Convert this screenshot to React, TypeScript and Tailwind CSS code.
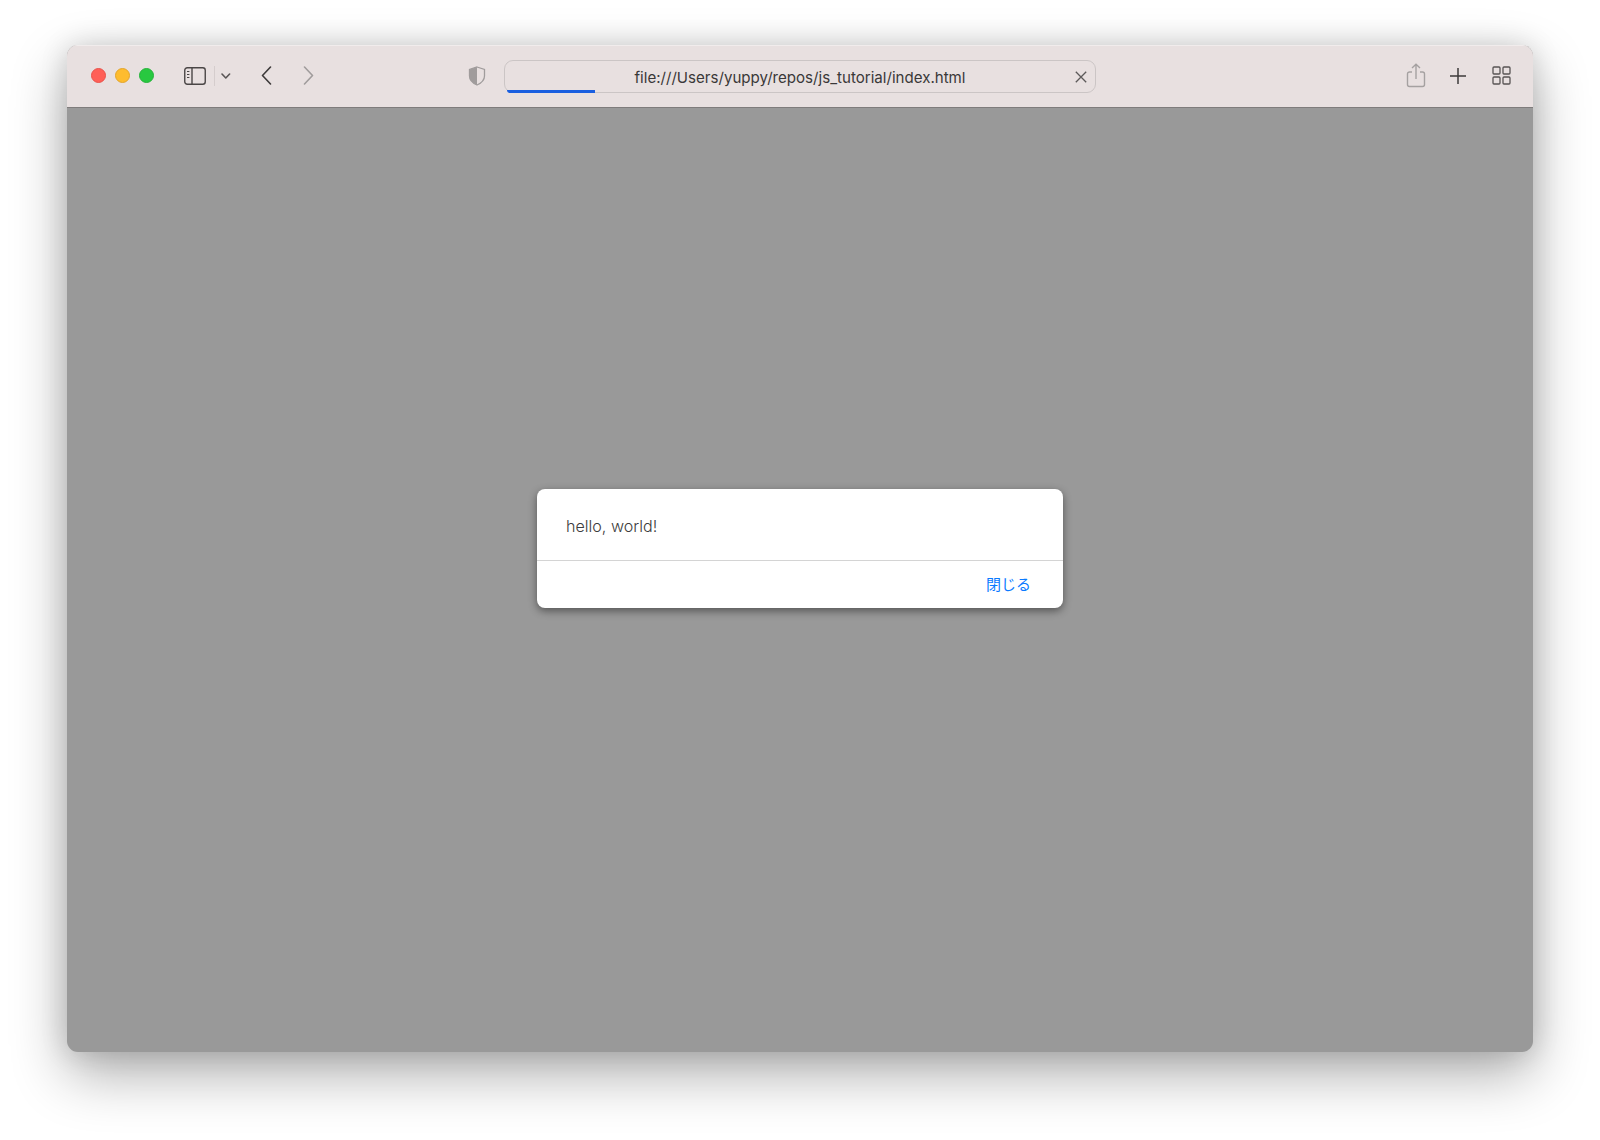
const stroke = 'fill-none stroke-current'

function TrafficLights() {
  return (
    <div className="flex gap-[9px]">
      <span className="size-[15px] rounded-full border border-[#e9524a] bg-[#ff5f57]" />
      <span className="size-[15px] rounded-full border border-[#e3a52b] bg-[#febc2e]" />
      <span className="size-[15px] rounded-full border border-[#25b33a] bg-[#28c840]" />
    </div>
  )
}

function SidebarIcon() {
  return (
    <svg width="24" height="20" viewBox="0 0 24 20" className={`${stroke} text-[#4a4646]`}>
      <rect x="1.75" y="1.75" width="20.5" height="16.5" rx="2.5" strokeWidth="1.4" />
      <path d="M9 2v16" strokeWidth="1.4" />
      <path d="M4 5.5h2.4M4 8.5h2.4M4 11.5h2.4" strokeWidth="1.2" />
    </svg>
  )
}

function Chevron({ d, w, h, className }: { d: string; w: number; h: number; className: string }) {
  return (
    <svg width={w} height={h} viewBox={`0 0 ${w} ${h}`} className={`${stroke} ${className}`}>
      <path d={d} strokeWidth="1.6" strokeLinecap="round" strokeLinejoin="round" />
    </svg>
  )
}

function Shield() {
  return (
    <svg width="18" height="20" viewBox="0 0 18 20">
      <path d="M9 1 16.5 3.4V10c0 4.2-3 7-7.5 9C4.5 17 1.5 14.2 1.5 10V3.4Z" fill="#e8e0e0" stroke="#a09c9c" strokeWidth="1.3" />
      <path d="M9 1 1.5 3.4V10c0 4.2 3 7 7.5 9Z" fill="#a09c9c" />
    </svg>
  )
}

function AddressBar() {
  return (
    <div className="relative flex h-[33px] w-[592px] items-center justify-center rounded-[9px] border border-[#cbc5c5] pt-[3px]">
      <span className="font-['Inter',sans-serif] text-[15.1px] text-[#3a3838]">file:///Users/yuppy/repos/js_tutorial/index.html</span>
      <svg width="12" height="12" viewBox="0 0 12 12" className={`${stroke} absolute right-[8px] top-[10px] text-[#5c5959]`}>
        <path d="M.8.8l10.4 10.4M11.2.8.8 11.2" strokeWidth="1.3" />
      </svg>
      <div className="absolute bottom-[-1px] left-[2px] h-[3px] w-[88px] rounded-bl-[3px] bg-[#1a5fe0]" />
    </div>
  )
}

function ToolbarRight() {
  return (
    <div className="ml-auto mr-[22px] flex items-center">
      <svg width="20" height="25" viewBox="0 0 20 25" className={`${stroke} text-[#a5a1a1]`}>
        <path d="M6 9H3.5A2 2 0 0 0 1.5 11v10.5a2 2 0 0 0 2 2h13a2 2 0 0 0 2-2V11a2 2 0 0 0-2-2H14" strokeWidth="1.4" />
        <path d="M10 16V1.5M6 5l4-3.8L14 5" strokeWidth="1.4" />
      </svg>
      <svg width="18" height="18" viewBox="0 0 18 18" className={`${stroke} ml-[23px] text-[#3d3a3a]`}>
        <path d="M9 1v16M1 9h16" strokeWidth="1.5" />
      </svg>
      <svg width="19" height="19" viewBox="0 0 19 19" className={`${stroke} ml-[25px] text-[#575353]`}>
        <rect x="1" y="1" width="7" height="7" rx="1" strokeWidth="1.3" />
        <rect x="11" y="1" width="7" height="7" rx="1" strokeWidth="1.3" />
        <rect x="1" y="11" width="7" height="7" rx="1" strokeWidth="1.3" />
        <rect x="11" y="11" width="7" height="7" rx="1" strokeWidth="1.3" />
      </svg>
    </div>
  )
}

function Toolbar() {
  return (
    <div className="flex h-[63px] items-center border-t border-b border-t-[#f1ecec] border-b-[#7f7c7c] bg-[#e8e0e0] pb-[2px] pl-[24px]">
      <TrafficLights />
      <div className="ml-[29px]"><SidebarIcon /></div>
      <div className="ml-[7px] h-[20px] w-px bg-[#d5cdcd]" />
      <div className="ml-[6px]"><Chevron d="M1 1l3.8 4L8.6 1" w={10} h={6} className="text-[#5a5656]" /></div>
      <div className="ml-[30px]"><Chevron d="M9.5 1 1.5 9.5l8 8.5" w={11} h={19} className="text-[#3d3a3a]" /></div>
      <div className="ml-[31px]"><Chevron d="M1.5 1l8 8.5-8 8.5" w={11} h={19} className="text-[#a09c9c]" /></div>
      <div className="ml-[154px]"><Shield /></div>
      <div className="ml-[18px] mt-[2px]"><AddressBar /></div>
      <ToolbarRight />
    </div>
  )
}

function Dialog() {
  return (
    <div className="h-[119px] w-[526px] rounded-[8px] bg-white font-['Inter',sans-serif] shadow-[0_3px_9px_rgba(0,0,0,0.45)]">
      <div className="flex h-[72px] items-center border-b border-[#d4d4d4] pl-[29px] pt-[3px] text-[16.1px] font-light text-[#3c3c3c]">hello, world!</div>
      <div className="flex h-[47px] items-center justify-end pr-[32px] pt-[2px]">
        <button className="font-['Inter','Noto_Sans_CJK_JP',sans-serif] text-[15px] text-[#0a7aff]">閉じる</button>
      </div>
    </div>
  )
}

export default function App() {
  return (
    <div className="h-[1140px] w-[1600px] overflow-hidden bg-white pl-[67px] pt-[45px]">
      <div className="h-[1007px] w-[1466px] overflow-hidden rounded-[11px] bg-[#999999] shadow-[0_22px_56px_rgba(0,0,0,0.32),0_0_28px_rgba(0,0,0,0.14)]">
        <Toolbar />
        <div className="flex justify-center pt-[381px]">
          <Dialog />
        </div>
      </div>
    </div>
  )
}
